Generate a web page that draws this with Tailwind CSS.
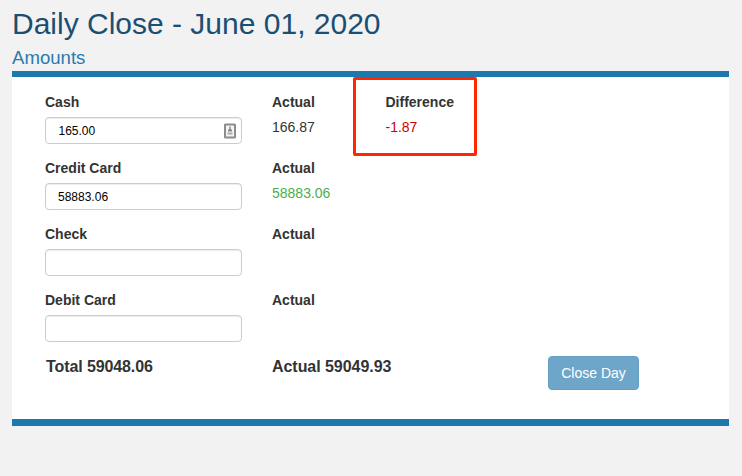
<!DOCTYPE html>
<html lang="en">
<head>
<meta charset="utf-8">
<title>Daily Close</title>
<script src="https://cdn.jsdelivr.net/npm/@tailwindcss/browser@4"></script>
</head>
<body class="h-screen overflow-hidden bg-[#f2f2f2] pl-3 pr-[13px] font-['Liberation_Sans',Arial,sans-serif] text-sm leading-5 text-[#333]">
<h1 class="h-[46px] pt-[7px] text-[30px] leading-[33px] text-[#1b4f72]">Daily Close - June 01, 2020</h1>
<h2 class="h-[25px] pt-px text-[18.6px] leading-[22px] text-[#2a7ab0]">Amounts</h2>
<main class="relative h-[355px] border-t-[6px] border-b-[7px] border-[#1d78ad] bg-white pl-[33px] pt-[15px]">
  <section class="grid h-[66px] grid-cols-[227px_113.5px_1fr]">
    <div>
      <label for="cash" class="mb-[5px] block font-bold">Cash</label>
      <div class="relative w-[197px]">
        <input id="cash" value="165.00" class="block h-[27px] w-full rounded border border-[#ccc] bg-white pl-[12.5px] pr-3 text-xs text-black shadow-[inset_0_1px_1px_rgba(0,0,0,0.075)]">
        <svg class="absolute right-[6px] top-[6px]" width="12" height="16" viewBox="0 0 12 16"><rect x="1" y="1.5" width="10" height="13" rx="0.5" fill="#f4f4f4" stroke="#8c8c8c" stroke-width="2"/><path d="M6 3.5v3" stroke="#888" stroke-width="1.4"/><path d="M4 8.5V7l1-1h2l1 1v1.500z" fill="#888"/><path d="M3.500 10.500h5" stroke="#aaa" stroke-width="2"/></svg>
      </div>
    </div>
    <div><b class="mb-[5px] block">Actual</b><span>166.87</span></div>
    <div><b class="mb-[5px] block">Difference</b><span class="text-[#c00]">-1.87</span></div>
  </section>
  <section class="grid h-[66px] grid-cols-[227px_113px_1fr]">
    <div>
      <label for="credit" class="mb-[5px] block font-bold">Credit Card</label>
      <input id="credit" value="58883.06" class="block h-[27px] w-[197px] rounded border border-[#ccc] bg-white px-3 text-xs text-black shadow-[inset_0_1px_1px_rgba(0,0,0,0.075)]">
    </div>
    <div><b class="mb-[5px] block">Actual</b><span class="text-[#4cae4c]">58883.06</span></div>
  </section>
  <section class="grid h-[66px] grid-cols-[227px_113px_1fr]">
    <div>
      <label for="check" class="mb-[5px] block font-bold">Check</label>
      <input id="check" class="block h-[27px] w-[197px] rounded border border-[#ccc] bg-white px-3 text-xs text-black shadow-[inset_0_1px_1px_rgba(0,0,0,0.075)]">
    </div>
    <b>Actual</b>
  </section>
  <section class="grid h-[66px] grid-cols-[227px_113px_1fr]">
    <div>
      <label for="debit" class="mb-[5px] block font-bold">Debit Card</label>
      <input id="debit" class="block h-[27px] w-[197px] rounded border border-[#ccc] bg-white px-3 text-xs text-black shadow-[inset_0_1px_1px_rgba(0,0,0,0.075)]">
    </div>
    <b>Actual</b>
  </section>
  <footer class="grid grid-cols-[227px_276px_91px] text-base leading-[22px] font-bold">
    <div class="pl-px tracking-[-0.1px]">Total 59048.06</div>
    <div class="tracking-[-0.05px]">Actual 59049.93</div>
    <button class="h-[34px] rounded border border-[#649fc3] bg-[#6ea6c9] text-sm font-normal text-white">Close Day</button>
  </footer>
  <div class="pointer-events-none absolute left-[341px] top-0 h-[79px] w-[124px] rounded-[2px] border-[3px] border-[#ff2600]"></div>
</main>
</body>
</html>
